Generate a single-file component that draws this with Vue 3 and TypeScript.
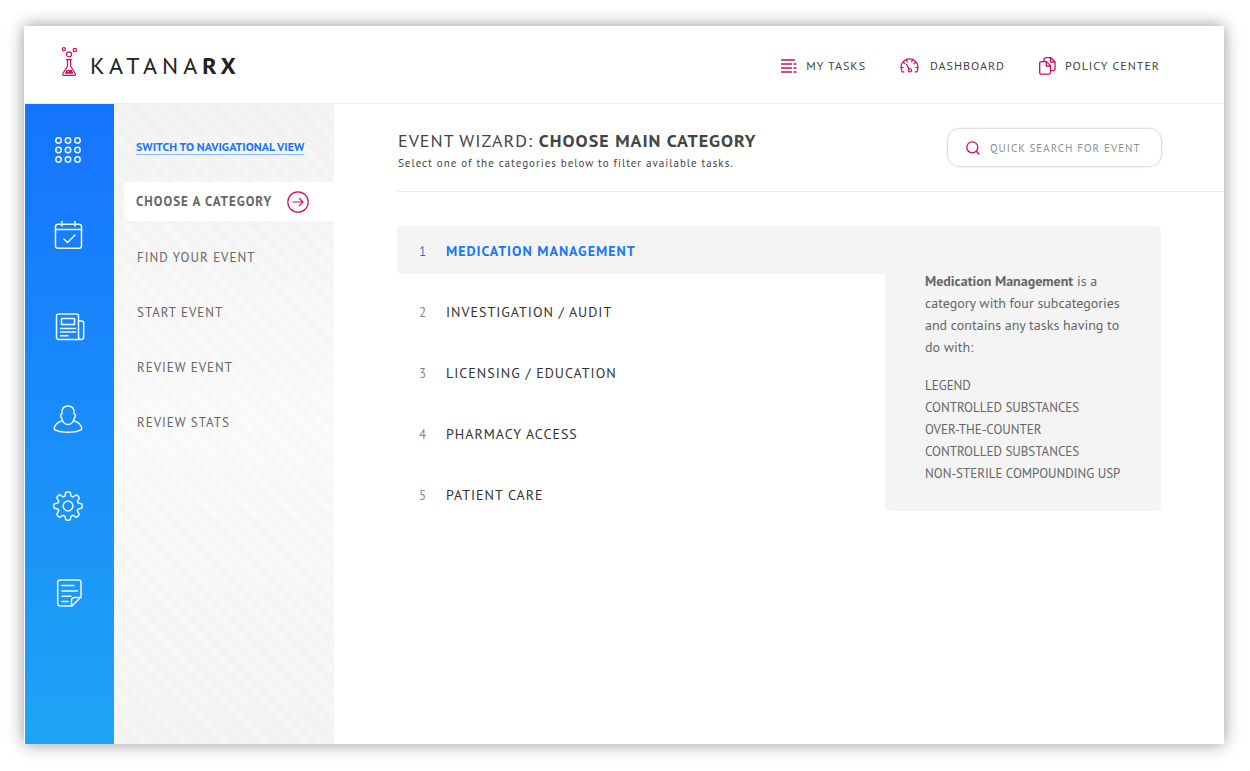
<script setup lang="ts">
import { ref } from 'vue'

const steps: string[] = ['FIND YOUR EVENT', 'START EVENT', 'REVIEW EVENT', 'REVIEW STATS']
const categories: string[] = [
  'MEDICATION MANAGEMENT',
  'INVESTIGATION / AUDIT',
  'LICENSING / EDUCATION',
  'PHARMACY ACCESS',
  'PATIENT CARE',
]
const subcategories: string[] = [
  'LEGEND',
  'CONTROLLED SUBSTANCES',
  'OVER-THE-COUNTER',
  'CONTROLLED SUBSTANCES',
  'NON-STERILE COMPOUNDING USP',
]
const selected = ref<number>(0)
const query = ref<string>('')
const dots: number[] = [3.5, 13, 22.5]
</script>

<template>
  <div class="page">
    <div class="window">
      <header class="topbar">
        <a class="brand" href="#" aria-label="KatanaRX">
          <svg class="flask" width="16" height="30" viewBox="0 0 16 30" aria-hidden="true">
            <circle cx="1.9" cy="2.2" r="1.5" />
            <circle cx="12.8" cy="3" r="1.7" />
            <circle cx="7" cy="7.4" r="2.5" />
            <path d="M4.5 12.6h5M5.5 13v6L.9 26.500q-.9 1.900 1 1.900h10.300q1.900 0 1-1.900L8.600 19v-6" />
            <path class="liquid" d="M4.600 22.400q2.400 1 4.900 0l2 4.300H2.600z" />
            <circle class="bubble" cx="6" cy="24.600" r=".7" />
          </svg>
          <span class="wordmark">KATANA<b>RX</b></span>
        </a>
        <nav class="topnav" aria-label="Main">
          <a href="#" class="top-link">
            <svg class="lines" width="16" height="14" viewBox="0 0 16 14" aria-hidden="true">
              <path d="M0 1h14M0 5h11M0 9h11M0 13h11M12.500 5h3M12.500 9h3M12.500 13h3" />
            </svg>
            <span>MY TASKS</span>
          </a>
          <a href="#" class="top-link wide">
            <svg width="19" height="16" viewBox="0 0 20 16" aria-hidden="true">
              <path d="M4 14.200H2.300A9 9 0 1 1 17.700 14.200H16M1.200 9.600h2M16.800 9.600h2M3.400 4l1.600 1.400M16.600 4l-1.600 1.400M7 1.700l.7 2M13 1.700l-.7 2M7 6.500l2.700 4.700" />
              <circle cx="10.500" cy="12.600" r="1.700" />
            </svg>
            <span>DASHBOARD</span>
          </a>
          <a href="#" class="top-link">
            <svg width="17" height="18" viewBox="0 0 17 18" aria-hidden="true">
              <path d="M5 4.500V2.500q0-1.800 1.800-1.800H12l4 4v7.500q0 1.500-1.500 1.500H12M11.500 1v4H16M2.300 4.600H7.500l4 4v7q0 1.500-1.500 1.500H2.200Q.7 17.100.7 15.600V6.200q0-1.600 1.600-1.600M7.300 5v4h4.200" />
            </svg>
            <span>POLICY CENTER</span>
          </a>
        </nav>
      </header>

      <div class="body">
        <nav class="rail" aria-label="Sections">
          <a href="#" aria-label="Apps">
            <svg width="30" height="26" viewBox="0 0 26 26" aria-hidden="true">
              <template v-for="y in dots" :key="y">
                <circle v-for="x in dots" :key="x" :cx="x" :cy="y" r="2.700" />
              </template>
            </svg>
          </a>
          <div class="rail-group">
            <a href="#" aria-label="Calendar">
              <svg width="30" height="28" viewBox="0 0 30 28" aria-hidden="true">
                <rect x="2.500" y="3.300" width="26" height="24" rx="2.500" />
                <path d="M2.500 8.500h26M9 .5v4.500M22 .5v4.500M11 18l3.500 3.500 7.500-7.500" />
              </svg>
            </a>
            <a href="#" aria-label="News">
              <svg width="30" height="28" viewBox="0 0 30 28" aria-hidden="true">
                <path d="M5.500 1H23.500q2 0 2 2v21q0 2.500 2.600 2.500T30.700 24V10q0-2-2-2H25.500M28 26.500H6Q3.500 26.500 3.500 24V3q0-2 2-2" />
                <path d="M8.500 5.500h13v6H8.500zM7.500 15.500h15M7.500 19h15M7.500 22.700h7.500" />
              </svg>
            </a>
            <a href="#" aria-label="People">
              <svg width="30" height="28" viewBox="0 0 30 28" aria-hidden="true">
                <path d="M15 .9c5 0 6.500 3.600 6.100 8 1.800.3 1.700 2.400.3 4.200C20.500 16.500 18.200 19.500 15 19.500S9.500 16.500 8.600 13.100C7.200 11.300 7.100 9.200 8.900 8.900 8.500 4.500 10 .9 15 .9z" />
                <path d="M9.500 15.700C5.500 16.700 1.300 18.500 1.300 24.300 4 26.300 9 27.200 15 27.200s11-.9 13.700-2.900c0-5.800-4.200-7.600-8.200-8.600" />
              </svg>
            </a>
          </div>
          <a href="#" aria-label="Settings">
            <svg width="30" height="30" viewBox="0 0 30 30" aria-hidden="true">
              <circle cx="15" cy="15" r="4.900" />
              <path d="M12.500 2.600q0-1.700 1.500-1.700h2q1.500 0 1.500 1.700l.5 2.500 2.100.9 2.100-1.500q1.300-.9 2.300.1l1.200 1.200q1 1 .1 2.300L24.300 10.100l.8 2 2.400.4q1.700 0 1.700 1.500v2q0 1.500-1.700 1.500l-2.400.4-.9 2.100 1.500 2.100q.9 1.300-.1 2.300l-1.200 1.200q-1 1-2.300.1L20.100 24.300l-2.100.8-.5 2.400q0 1.700-1.500 1.700h-2q-1.500 0-1.500-1.700L12.100 25.100 10 24.300l-2.100 1.400q-1.300.9-2.300-.1L4.400 24.400q-1-1-.1-2.300L5.800 20 4.900 17.900l-2.400-.4Q.8 17.500.8 16v-2q0-1.500 1.700-1.500l2.400-.4.9-2L4.300 7.900q-.9-1.300.1-2.300L5.600 4.400q1-1 2.300-.1L10 5.900l2.100-.8z" />
            </svg>
          </a>
          <a href="#" aria-label="Notes">
            <svg width="30" height="28" viewBox="0 0 30 28" aria-hidden="true">
              <path d="M7.500 1H25.500q2.500 0 2.500 2.500V18L19 27H7.500Q4.700 27 4.700 24.500V3.500Q4.700 1 7.500 1zM18.500 27v-5.500q0-3 3-3h6.500M9 6.500H21M9 12h15.500M9 17.300h9M9 22.500H15" />
            </svg>
          </a>
        </nav>

        <aside class="sidebar">
          <a class="switch" href="#">SWITCH TO NAVIGATIONAL VIEW</a>
          <a class="current" href="#" aria-current="step">
            <span>CHOOSE A CATEGORY</span>
            <svg width="22" height="22" viewBox="0 0 22 22" aria-hidden="true">
              <circle cx="11" cy="11" r="10.200" />
              <path d="M6 11h10M12.500 7.500L16 11l-3.500 3.500" />
            </svg>
          </a>
          <a v-for="step in steps" :key="step" class="step" href="#">{{ step }}</a>
        </aside>

        <main class="content">
          <div class="heading">
            <div>
              <h1>EVENT WIZARD: <b>CHOOSE MAIN CATEGORY</b></h1>
              <p>Select one of the categories below to filter available tasks.</p>
            </div>
            <label class="search">
              <svg width="14" height="14" viewBox="0 0 14 14" aria-hidden="true">
                <circle cx="6.300" cy="6.300" r="5.500" />
                <path d="M10.200 10.200l2.800 2.800" />
              </svg>
              <input v-model="query" type="text" aria-label="Quick search for event" placeholder="QUICK SEARCH FOR EVENT" />
            </label>
          </div>

          <div class="wizard">
            <ol class="categories">
              <li v-for="(name, i) in categories" :key="name">
                <button type="button" :class="{ active: i === selected }" @click="selected = i">
                  <span class="num">{{ i + 1 }}</span>
                  <span>{{ name }}</span>
                </button>
              </li>
            </ol>
            <section class="details">
              <p><b>Medication Management</b> is a category with four subcategories and contains any tasks having to do with:</p>
              <ul>
                <li v-for="(sub, i) in subcategories" :key="i">{{ sub }}</li>
              </ul>
            </section>
          </div>
        </main>
      </div>
    </div>
  </div>
</template>

<style>
body {
  margin: 0;
  background: #fff;
}
</style>

<style scoped>
* {
  box-sizing: border-box;
}

.page {
  display: flex;
  min-height: 100vh;
  padding: 26px 26px 27px 24px;
  font-family: "PT Sans", Lato, "Noto Sans", sans-serif;
  color: #444;
}

a {
  color: inherit;
  text-decoration: none;
}

svg {
  display: block;
  flex: none;
  overflow: visible;
  fill: none;
  stroke: #c9105f;
  stroke-width: 1.3;
  stroke-linecap: round;
  stroke-linejoin: round;
}

.window {
  display: flex;
  flex: 1;
  flex-direction: column;
  background: #fff;
  box-shadow: 0 0 16px rgba(0, 0, 0, 0.42);
}

.topbar {
  display: flex;
  align-items: center;
  justify-content: space-between;
  height: 78px;
  padding: 0 64px 0 38px;
  border-bottom: 1px solid #eee;
}

.brand {
  display: flex;
  align-items: center;
  gap: 12px;
  padding-bottom: 6px;
}

.flask {
  stroke-width: 1.2;
}

.flask .liquid {
  fill: #c9105f;
  stroke: none;
}

.flask .bubble {
  fill: #fff;
  stroke: none;
}

.wordmark {
  padding-top: 8px;
  font-size: 24px;
  line-height: 28px;
  letter-spacing: 5px;
  color: #222;
}

.topnav {
  display: flex;
  align-items: center;
  gap: 34px;
}

.top-link {
  display: flex;
  align-items: center;
  gap: 9px;
  padding-top: 3px;
  font-size: 12px;
  line-height: 16px;
  letter-spacing: 1px;
}

.top-link.wide {
  gap: 11px;
}

.lines {
  stroke-linecap: butt;
}

.body {
  display: flex;
  flex: 1;
  padding-left: 1px;
}

.rail {
  display: flex;
  flex-direction: column;
  align-items: center;
  gap: 58px;
  width: 89px;
  padding: 33px 3px 40px 0;
  background: linear-gradient(#1574ff, #1ea4f5);
}

.rail-group {
  display: flex;
  flex-direction: column;
  gap: 64px;
}

.rail svg {
  stroke: #eef6ff;
  stroke-width: 1.5;
}

.sidebar {
  display: flex;
  flex-direction: column;
  align-items: flex-start;
  width: 220px;
  padding-top: 36px;
  font-size: 13px;
  line-height: 16px;
  letter-spacing: 1px;
  color: #666;
  background:
    repeating-linear-gradient(45deg, rgba(0, 0, 0, 0.01) 0 7px, transparent 7px 14px),
    linear-gradient(#f4f4f4, #fbfbfb 50%, #f5f5f5);
}

.switch {
  margin: 0 0 27px 22px;
  border-bottom: 1px solid #8abaff;
  font-size: 12px;
  line-height: 14px;
  letter-spacing: 0;
  font-weight: 700;
  color: #1878fb;
}

.current {
  display: flex;
  align-items: center;
  align-self: stretch;
  gap: 15px;
  height: 39px;
  margin: 0 0 9px 10px;
  padding-left: 12px;
  border-radius: 5px 0 0 5px;
  font-weight: 700;
  background: #fff;
}

.current svg {
  stroke-width: 1.2;
}

.step {
  padding: 20px 0 19px 23px;
}

.content {
  flex: 1;
  min-width: 0;
  padding-left: 63px;
}

.heading {
  display: flex;
  align-items: flex-start;
  justify-content: space-between;
  height: 88px;
  padding: 24px 62px 0 1px;
  border-bottom: 1px solid #ebebeb;
}

h1 {
  margin: 0;
  font-size: 18px;
  line-height: 26px;
  font-weight: 400;
  letter-spacing: 1px;
}

.heading p {
  margin: 0;
  font-size: 11px;
  line-height: 18px;
  letter-spacing: 1px;
}

.search {
  display: flex;
  align-items: center;
  gap: 10px;
  width: 215px;
  height: 39px;
  padding: 0 12px 0 18px;
  border: 1px solid #ddd;
  border-radius: 13px;
  box-shadow: 0 0 2px rgba(0, 0, 0, 0.15);
}

.search input {
  flex: 1;
  min-width: 0;
  padding: 0;
  border: 0;
  outline: 0;
  font: 11px/16px "PT Sans", Lato, "Noto Sans", sans-serif;
  letter-spacing: 1px;
  color: #444;
  background: none;
}

.search input::placeholder {
  color: #909090;
  opacity: 1;
}

.wizard {
  display: flex;
  align-items: flex-start;
  padding: 34px 63px 40px 0;
}

ol,
ul {
  margin: 0;
  padding: 0;
  list-style: none;
}

.categories {
  display: flex;
  flex: 1;
  flex-direction: column;
  gap: 13px;
}

.categories button {
  display: flex;
  align-items: baseline;
  gap: 19px;
  width: 100%;
  height: 48px;
  padding: 16px 0 0 22px;
  border: 0;
  border-radius: 5px 0 0 5px;
  font: 14px/18px "PT Sans", Lato, "Noto Sans", sans-serif;
  letter-spacing: 1px;
  text-align: left;
  color: #333;
  background: none;
}

.num {
  width: 8px;
  font-size: 13px;
  font-weight: 400;
  letter-spacing: 0;
  color: #888;
}

.categories .active {
  font-weight: 700;
  color: #1878fb;
  background: #f4f4f4;
}

.active .num {
  color: inherit;
}

.details {
  width: 276px;
  padding: 44px 30px 26px 40px;
  border-radius: 0 5px 5px 5px;
  font-size: 14px;
  line-height: 22px;
  color: #666;
  background: #f4f4f4;
}

.details p {
  margin: 0 0 17px;
}

.details ul {
  font-size: 13px;
}
</style>
